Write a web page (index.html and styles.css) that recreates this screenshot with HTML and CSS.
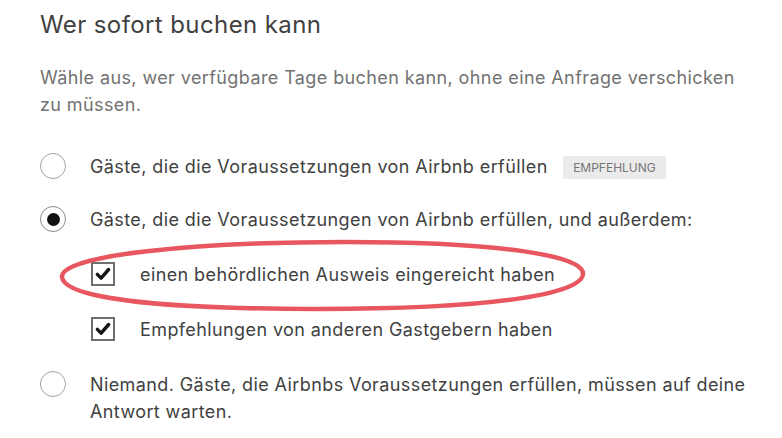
FILE: index.html
```html
<!DOCTYPE html>
<html lang="de">
<head>
<meta charset="utf-8">
<link rel="stylesheet" href="styles.css">
</head>
<body>
<main class="section">
  <h2 class="title">Wer sofort buchen kann</h2>
  <p class="lead">Wähle aus, wer verfügbare Tage buchen kann, ohne eine Anfrage verschicken zu müssen.</p>
  <ul class="options">
    <li class="option row-1">
      <span class="radio"></span>
      <span class="label">Gäste, die die Voraussetzungen von Airbnb erfüllen <span class="badge">EMPFEHLUNG</span></span>
    </li>
    <li class="option row-2">
      <span class="radio checked"></span>
      <span class="label">Gäste, die die Voraussetzungen von Airbnb erfüllen, und außerdem:</span>
    </li>
    <li class="option sub row-3">
      <span class="checkbox"><svg viewBox="0 0 24 24" width="18" height="18"><path d="M4.5 12.5 L9.5 17.5 L19.5 6" fill="none" stroke="#141414" stroke-width="4.6" stroke-linecap="round" stroke-linejoin="round"/></svg></span>
      <span class="label">einen behördlichen Ausweis eingereicht haben</span>
      <svg class="mark" viewBox="0 0 534 76" width="534" height="76"><path d="M6 40 C 4 18, 140 5, 290 5 C 440 5, 528 18, 527 37 C 526 58, 430 72, 264 72 C 110 72, 8 62, 6 40 Z" fill="none" stroke="#e8565f" stroke-width="4.5"/></svg>
    </li>
    <li class="option sub row-4">
      <span class="checkbox"><svg viewBox="0 0 24 24" width="18" height="18"><path d="M4.5 12.5 L9.5 17.5 L19.5 6" fill="none" stroke="#141414" stroke-width="4.6" stroke-linecap="round" stroke-linejoin="round"/></svg></span>
      <span class="label">Empfehlungen von anderen Gastgebern haben</span>
    </li>
    <li class="option row-5">
      <span class="radio"></span>
      <span class="label">Niemand. Gäste, die Airbnbs Voraussetzungen erfüllen, müssen auf deine Antwort warten.</span>
    </li>
  </ul>
</main>
</body>
</html>
```
FILE: styles.css
```css
html, body {
  margin: 0;
  padding: 0;
  background: #ffffff;
}
body {
  font-family: "Inter", "Noto Sans", sans-serif;
  color: #414141;
}
.section {
  padding: 0 30px 0 40px;
}
.title {
  margin: 11px 0 0;
  font-size: 24px;
  line-height: 28px;
  font-weight: 400;
  letter-spacing: 0.4px;
  color: #414141;
}
.lead {
  margin: 25px 0 0;
  font-size: 18px;
  line-height: 27px;
  letter-spacing: 0.4px;
  color: #727272;
}
.options {
  list-style: none;
  margin: 35px 0 0;
  padding: 0;
}
.option {
  display: flex;
  align-items: flex-start;
  font-size: 18px;
  line-height: 27px;
  letter-spacing: 0.4px;
  margin-top: 28px;
}
.option.row-1 { margin-top: 0; }
.option.row-2 { margin-top: 26px; }
.option.sub {
  position: relative;
  padding-left: 51px;
}
.radio {
  flex: none;
  width: 26px;
  height: 26px;
  margin: 0 24px 0 0;
  border: 1.5px solid #a4a4a4;
  border-radius: 50%;
  box-sizing: border-box;
  display: flex;
  align-items: center;
  justify-content: center;
}
.radio.checked {
  border-color: #8a8a8a;
}
.radio.checked::after {
  content: "";
  width: 13px;
  height: 13px;
  border-radius: 50%;
  background: #111;
}
.checkbox {
  flex: none;
  width: 24px;
  height: 24px;
  margin: 1px 25px 0 0;
  border: 2px solid #6f6f6f;
  box-sizing: border-box;
  display: flex;
  align-items: center;
  justify-content: center;
}
.label {
  flex: 1;
}
.badge {
  display: inline-block;
  margin-left: 10px;
  padding: 0 10px;
  background: #ebebeb;
  color: #767676;
  font-size: 12px;
  line-height: 23px;
  letter-spacing: 0;
  vertical-align: 1px;
}
.mark {
  position: absolute;
  left: 16px;
  top: -24px;
  pointer-events: none;
}
```
